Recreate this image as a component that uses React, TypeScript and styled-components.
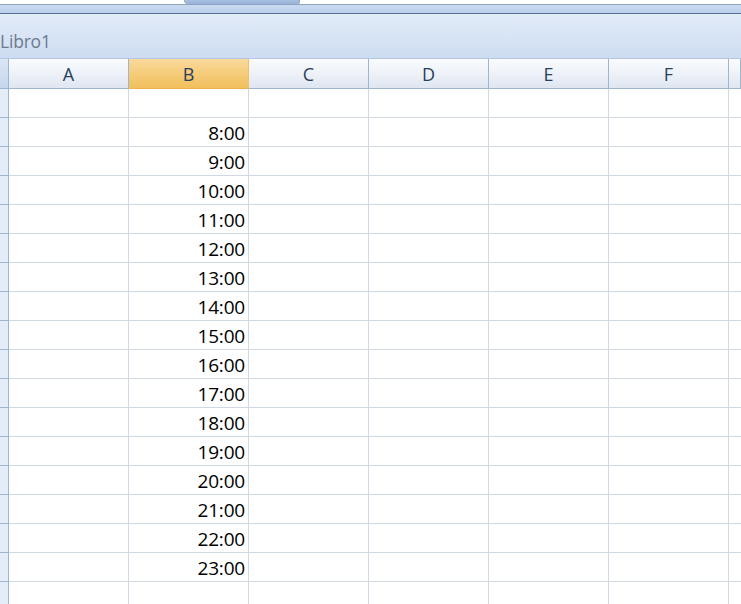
import React from "react";
import styled, { createGlobalStyle } from "styled-components";

const GlobalStyle = createGlobalStyle`
    html, body {
        margin: 0;
        padding: 0;
        background: #ffffff;
        overflow: hidden;
    }
    body {
        font-family: "Open Sans", "Liberation Sans", sans-serif;
    }
`;

const Window = styled.div`
    width: 741px;
    height: 604px;
    display: flex;
    flex-direction: column;
    overflow: hidden;

    & > * {
        flex-shrink: 0;
    }
`;

const TopStrip = styled.div`
    height: 4px;
    background: #ffffff;
    display: flex;
`;

const Tab = styled.div`
    margin-left: 184px;
    width: 114px;
    height: 4px;
    background: linear-gradient(#a7bfe0, #98b3da);
    border-left: 1px solid #8fa5c2;
    border-right: 1px solid #8fa5c2;
    border-bottom-left-radius: 4px;
    border-bottom-right-radius: 2px;
`;

const Band = styled.div`
    height: 8px;
    border-top: 1px solid #8ea3bf;
    border-bottom: 1px solid #56708f;
    background: linear-gradient(#c9dbf1, #b9cfeb);
`;

const TitleBar = styled.div`
    height: 45px;
    display: flex;
    align-items: center;
    padding-top: 10px;
    box-sizing: border-box;
    background: linear-gradient(#e3ecf8, #d6e3f5 60%, #cddcf2);
    border-bottom: 1px solid #b3c7e1;
    color: #6c7a8d;
    font-size: 17.5px;
    letter-spacing: -0.2px;
`;

const Grid = styled.div`
    display: grid;
    grid-template-columns: 9px repeat(6, 120px) 1fr;
    grid-auto-rows: 29px;
    grid-template-rows: 30px;
`;

const Corner = styled.div`
    background: linear-gradient(#dbe6f4, #c5d6ec);
    border-right: 1px solid #9eb6ce;
    border-bottom: 1px solid #9eb6ce;
    box-sizing: border-box;
`;

const ColHead = styled.div<{ $active?: boolean }>`
    box-sizing: border-box;
    border-right: 1px solid ${(p) => (p.$active ? "#f2c165" : "#9eb6ce")};
    border-bottom: 1px solid ${(p) => (p.$active ? "#f2b14f" : "#9eb6ce")};
    background: ${(p) =>
        p.$active
            ? "linear-gradient(#f9da9c, #f6cc7a 50%, #f1c05c)"
            : "linear-gradient(#f9fbfd, #eef2f8 50%, #dfe6f1)"};
    display: flex;
    align-items: center;
    justify-content: center;
    font-size: 18px;
    color: #27405c;
    padding-top: 1px;
`;

const RowHead = styled.div`
    box-sizing: border-box;
    background: #e4ecf7;
    border-right: 1px solid #9eb6ce;
    border-bottom: 1px solid #9eb6ce;
`;

const Cell = styled.div<{ $last?: boolean }>`
    box-sizing: border-box;
    border-right: ${(p) => (p.$last ? "none" : "1px solid #d0d7e5")};
    border-bottom: 1px solid #d0d7e5;
    display: flex;
    align-items: center;
    justify-content: flex-end;
    padding-right: 3px;
    padding-top: 1px;
    font-size: 19px;
    color: #000000;
    letter-spacing: -0.2px;
`;

const columns = ["A", "B", "C", "D", "E", "F", ""];

const times: string[] = [""];
for (let h = 8; h <= 23; h++) times.push(`${h}:00`);
times.push("");

const App: React.FC = () => {
    return (
        <Window>
            <GlobalStyle />
            <TopStrip>
                <Tab />
            </TopStrip>
            <Band />
            <TitleBar>Libro1</TitleBar>
            <Grid>
                <Corner />
                {columns.map((c, i) => (
                    <ColHead key={i} $active={c === "B"}>
                        {c}
                    </ColHead>
                ))}
                {times.map((t, r) => (
                    <React.Fragment key={r}>
                        <RowHead />
                        {columns.map((c, i) => (
                            <Cell key={i} $last={i === columns.length - 1}>
                                {c === "B" ? t : ""}
                            </Cell>
                        ))}
                    </React.Fragment>
                ))}
            </Grid>
        </Window>
    );
};

export default App;
